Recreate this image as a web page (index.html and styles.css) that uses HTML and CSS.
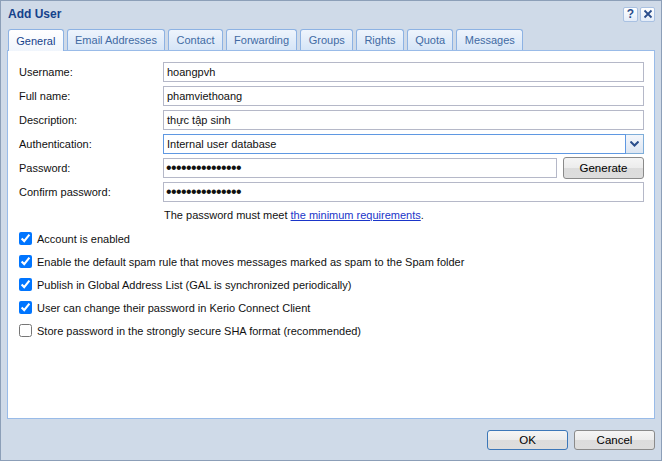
FILE: index.html
```html
<!DOCTYPE html>
<html>
<head>
<meta charset="utf-8">
<link rel="stylesheet" href="styles.css">
</head>
<body>
<div class="window">
  <div class="header">
    <div class="title">Add User</div>
    <div class="tools">
      <span class="tool help">?</span>
      <span class="tool close"><svg width="10" height="10" viewBox="0 0 10 10"><path d="M1.5 1.5 L8.5 8.5 M8.5 1.5 L1.5 8.5" stroke="#2b4e8c" stroke-width="1.8" fill="none"/></svg></span>
    </div>
  </div>
  <div class="tabs">
    <div class="tab active">General</div>
    <div class="tab">Email Addresses</div>
    <div class="tab">Contact</div>
    <div class="tab">Forwarding</div>
    <div class="tab">Groups</div>
    <div class="tab">Rights</div>
    <div class="tab">Quota</div>
    <div class="tab">Messages</div>
  </div>
  <div class="panel">
    <div class="form">
      <div class="row"><label>Username:</label><div class="field"><div class="input">hoangpvh</div></div></div>
      <div class="row"><label>Full name:</label><div class="field"><div class="input">phamviethoang</div></div></div>
      <div class="row"><label>Description:</label><div class="field"><div class="input">thực tập sinh</div></div></div>
      <div class="row"><label>Authentication:</label><div class="field"><div class="select"><div class="select-text">Internal user database</div><div class="arrow"><svg width="9" height="6" viewBox="0 0 9 6"><path d="M0.5 0.5 L4.5 4.5 L8.5 0.5" stroke="#2b4e8c" stroke-width="2" fill="none"/></svg></div></div></div></div>
      <div class="row"><label>Password:</label><div class="field pw"><div class="input dots">•••••••••••••••</div><div class="btn gen">Generate</div></div></div>
      <div class="row"><label>Confirm password:</label><div class="field"><div class="input dots">•••••••••••••••</div></div></div>
      <div class="note">The password must meet <a href="#">the minimum requirements</a>.</div>
    </div>
    <div class="checks">
      <label class="check"><input type="checkbox" checked><span>Account is enabled</span></label>
      <label class="check"><input type="checkbox" checked><span>Enable the default spam rule that moves messages marked as spam to the Spam folder</span></label>
      <label class="check"><input type="checkbox" checked><span>Publish in Global Address List (GAL is synchronized periodically)</span></label>
      <label class="check"><input type="checkbox" checked><span>User can change their password in Kerio Connect Client</span></label>
      <label class="check"><input type="checkbox"><span>Store password in the strongly secure SHA format (recommended)</span></label>
    </div>
  </div>
  <div class="footer">
    <div class="btn ok">OK</div>
    <div class="btn">Cancel</div>
  </div>
</div>
</body>
</html>
```
FILE: styles.css
```css
* { box-sizing: border-box; }
html, body { margin: 0; padding: 0; }
body {
  width: 662px;
  height: 461px;
  font-family: "Liberation Sans", Arial, sans-serif;
  font-size: 11px;
  color: #111;
  background: #fff;
}
.window {
  width: 662px;
  height: 461px;
  border: 1px solid #8c9fb8;
  background: #cfdae8;
  padding: 0 6px 0 6px;
  display: flex;
  flex-direction: column;
}
.header {
  height: 27px;
  display: flex;
  align-items: center;
  justify-content: space-between;
}
.title {
  font-weight: bold;
  color: #15428b;
  font-size: 12px;
  margin-left: 1px;
  margin-top: -2px;
}
.tools {
  display: flex;
  gap: 2px;
  margin-top: -1px;
}
.tool {
  width: 15px;
  height: 15px;
  border: 1px solid #a9c1e2;
  border-radius: 2px;
  background: linear-gradient(#ffffff, #e3ecf8);
  display: flex;
  align-items: center;
  justify-content: center;
  color: #2b4e8c;
  font-weight: bold;
  font-size: 12px;
}
.tabs {
  display: flex;
  gap: 3px;
  padding-left: 1px;
  height: 22px;
  align-items: flex-end;
}
.tab {
  height: 21px;
  padding: 0 7.3px;
  border: 1px solid #8db2e3;
  border-bottom: none;
  border-radius: 3px 3px 0 0;
  background: linear-gradient(#eef4fc, #d6e5f7);
  color: #416aa3;
  display: flex;
  align-items: center;
  font-size: 11px;
}
.tab.active {
  height: 22px;
  background: linear-gradient(#ffffff, #f0f5fc);
  color: #15428b;
  position: relative;
  top: 1px;
}
.panel {
  height: 369px;
  background: #fff;
  border: 1px solid #99bbe8;
  padding: 11px 10px 0 10px;
}
.form {
  display: flex;
  flex-direction: column;
  gap: 4px;
}
.row {
  display: flex;
  align-items: center;
  height: 20px;
}
.row label {
  width: 145px;
  padding-left: 1px;
}
.field {
  flex: 1;
  display: flex;
  gap: 6px;
}
.input {
  flex: 1;
  height: 20px;
  border: 1px solid #b5b8c8;
  padding: 0 3px;
  display: flex;
  align-items: center;
  background: #fff;
}
.dots { font-size: 16px; letter-spacing: -0.6px; padding-left: 2px; }
.select {
  flex: 1;
  height: 20px;
  border: 1px solid #7eadd9;
  display: flex;
}
.select-text {
  flex: 1;
  padding: 0 3px;
  display: flex;
  align-items: center;
  border: 1px solid #5f98e2;
  margin: -1px 0 -1px -1px;
}
.arrow {
  width: 17px;
  background: linear-gradient(#f3f6fb, #dde6f2);
  display: flex;
  align-items: center;
  justify-content: center;
}
.btn {
  width: 81px;
  height: 20px;
  border: 1px solid #8a8a8a;
  border-radius: 3px;
  background: linear-gradient(#f5f5f5 0%, #ececec 50%, #dcdcdc 51%, #dddddd 100%);
  display: flex;
  align-items: center;
  justify-content: center;
  color: #000;
  font-size: 11.5px;
}
.gen { height: 22px; margin-top: -1px; }
.note {
  padding-left: 146px;
  margin-top: 2px;
  height: 14px;
  line-height: 14px;
}
.note a { color: #1a35c9; text-decoration: underline; }
.checks {
  margin-top: 10px;
  display: flex;
  flex-direction: column;
  gap: 10px;
}
.check {
  display: flex;
  align-items: center;
  height: 13px;
}
.check input {
  margin: 0 5px 0 1px;
  width: 13px;
  height: 13px;
  accent-color: #0075ff;
}
.footer {
  flex: 1;
  display: flex;
  justify-content: flex-end;
  align-items: flex-start;
  gap: 6px;
  padding-top: 11px;
}
.ok { border-color: #3c77b8; }
```
